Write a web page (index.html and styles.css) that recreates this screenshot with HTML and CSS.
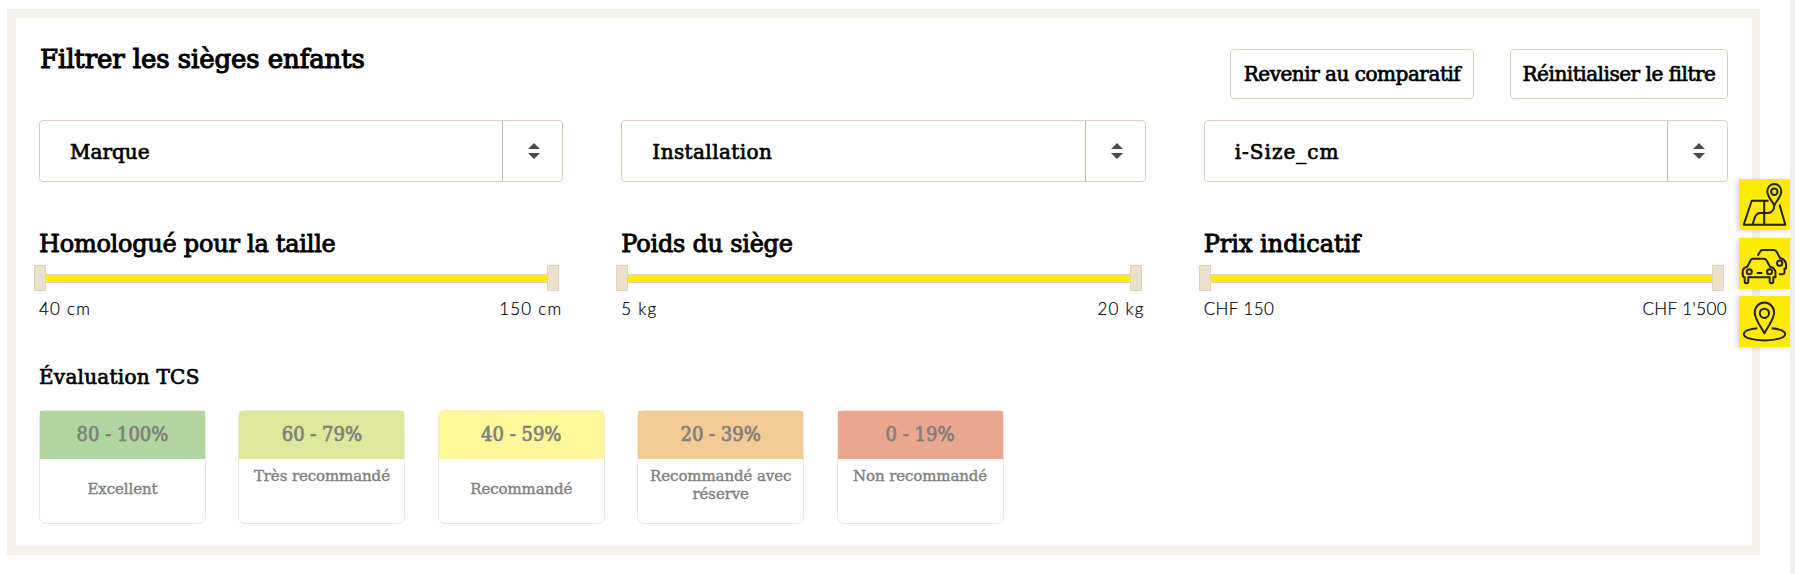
FILE: index.html
```html
<!DOCTYPE html>
<html lang="fr">
<head>
    <meta charset="UTF-8">
    <meta name="viewport" content="width=device-width, initial-scale=1.0">
    <title>Comparatif sièges enfants</title>
    <link rel="stylesheet" href="styles.css">
</head>
<body>
    <div class="filter">
        <div class="top">
            <h1>Filtrer les sièges enfants</h1>
            <div class="btnDiv">
                <button class="btn">Revenir au comparatif</button>
                <button class="btn">Réinitialiser le filtre</button>
            </div>
        </div>

        <div class="grid selects">
            <div class="select">
                <span class="label">Marque</span>
                <span class="arrows"><svg width="12" height="16" viewBox="0 0 12 16"><path d="M6 0L12 6H0zM0 10H12L6 16z"/></svg></span>
            </div>
            <div class="select">
                <span class="label wide">Installation</span>
                <span class="arrows"><svg width="12" height="16" viewBox="0 0 12 16"><path d="M6 0L12 6H0zM0 10H12L6 16z"/></svg></span>
            </div>
            <div class="select">
                <span class="label wider">i-Size_cm</span>
                <span class="arrows"><svg width="12" height="16" viewBox="0 0 12 16"><path d="M6 0L12 6H0zM0 10H12L6 16z"/></svg></span>
            </div>
        </div>

        <div class="grid ranges">
            <div class="range">
                <h2>Homologué pour la taille</h2>
                <div class="slider"><span class="handle"></span><span class="track"></span><span class="handle"></span></div>
                <div class="values"><span>40 cm</span><span>150 cm</span></div>
            </div>
            <div class="range">
                <h2>Poids du siège</h2>
                <div class="slider"><span class="handle"></span><span class="track"></span><span class="handle"></span></div>
                <div class="values"><span>5 kg</span><span>20 kg</span></div>
            </div>
            <div class="range">
                <h2 class="wide">Prix indicatif</h2>
                <div class="slider"><span class="handle"></span><span class="track"></span><span class="handle"></span></div>
                <div class="values price"><span>CHF 150</span><span>CHF 1'500</span></div>
            </div>
        </div>

        <h3>Évaluation TCS</h3>
        <div class="ratings">
            <div class="card">
                <div class="score excellent">80 - 100%</div>
                <p class="low">Excellent</p>
            </div>
            <div class="card">
                <div class="score very-good">60 - 79%</div>
                <p>Très recommandé</p>
            </div>
            <div class="card">
                <div class="score good">40 - 59%</div>
                <p class="low">Recommandé</p>
            </div>
            <div class="card">
                <div class="score reserve">20 - 39%</div>
                <p>Recommandé avec réserve</p>
            </div>
            <div class="card">
                <div class="score bad">0 - 19%</div>
                <p>Non recommandé</p>
            </div>
        </div>
    </div>

    <div class="scrollbar"></div>

    <div class="quicklinks">
        <a class="quick">
            <svg viewBox="0 0 51 51">
                <path d="M29.5 21.7H12.7L4.7 45.7H46.3L40.5 25.5M25.2 21.7V45.7M13.5 45.5L15.8 38.5Q17.5 34 21.5 34H29Q35 33.4 35.3 26.5"/>
                <path d="M35.3 26.3C33 21.5 28.3 18 28.3 12.3A7 7.3 0 0 1 42.3 12.3C42.3 18 37.5 21.5 35.3 26.3z"/>
                <circle cx="35.3" cy="12.7" r="3.2"/>
            </svg>
        </a>
        <a class="quick">
            <svg viewBox="0 0 51 51">
                <path d="M8.3 28.8L11.3 22.7Q12.2 20.8 14.3 20.8H24.8Q26.8 20.8 27.8 22.7L31 28.8Q36.5 30.2 36.5 35.5V39.3H34.3V43.5Q34.3 45.3 32.5 45.3T30.7 43.5V39.3H9.3V43.5Q9.3 45.3 7.5 45.3T5.7 43.5V39.3Q3.7 39.3 3.7 36.5V33.5Q3.7 30 8.3 28.8zM17.7 35H23.3"/>
                <circle cx="10.3" cy="33.7" r="2.5"/>
                <circle cx="30.5" cy="33.7" r="2.5"/>
                <path d="M18.7 17.7L21 13.8Q22 12 24 12H34.5Q36.8 12 37.8 14L41 20Q46.8 21.5 47 26.5V30.5H45.5V34.5Q45.3 36.3 43.5 36.3H40"/>
                <circle cx="40.7" cy="25.2" r="2.6"/>
            </svg>
        </a>
        <a class="quick">
            <svg viewBox="0 0 51 51">
                <path d="M25.4 37.2C22.5 31.5 15.7 23.5 15.7 16.6A9.7 10 0 0 1 35.1 16.6C35.1 23.5 28.3 31.5 25.4 37.2z"/>
                <circle cx="25.4" cy="17.3" r="4.6"/>
                <path d="M18.3 32.2C10 33 4.8 35.2 4.8 38.2C4.8 41.8 14 44.4 25.5 44.4S46.2 41.8 46.2 38.2C46.2 35.2 41 33 32.7 32.2"/>
            </svg>
        </a>
    </div>
</body>
</html>
```
FILE: styles.css
```css
* {
    margin: 0;
    padding: 0;
    box-sizing: border-box;
}

body {
    font-family: "DejaVu Serif", serif;
    background-color: white;
    color: black;
    display: flex;
    justify-content: space-between;
    height: 574px;
    overflow: hidden;
}

.filter {
    width: 1753px;
    height: 546px;
    margin: 9px 0 0 7px;
    border: 9px solid #f5f1e9;
    border-right-width: 8px;
    padding: 31px 24px 0 23px;
}

.scrollbar {
    width: 5px;
    background-color: #f0f0f0;
}

h1, h2, h3, .btn, .label {
    font-weight: normal;
    -webkit-text-stroke: 0.7px black;
}

.top {
    display: flex;
    justify-content: space-between;
    height: 50px;
}

h1 {
    font-size: 26px;
    line-height: 20px;
    letter-spacing: -0.1px;
    padding-left: 1px;
    -webkit-text-stroke-width: 1.1px;
}

.btnDiv {
    display: flex;
    gap: 36px;
}

.btn {
    height: 50px;
    width: 244px;
    font-family: inherit;
    font-size: 20px;
    letter-spacing: -0.48px;
    color: black;
    background-color: white;
    border: 1px solid #dccfb5;
    border-radius: 4px;
    white-space: nowrap;
    cursor: pointer;
}

.btn + .btn {
    width: 218px;
}

.grid {
    display: grid;
    grid-template-columns: repeat(3, 1fr);
    gap: 58px;
}

.selects {
    margin-top: 21px;
}

.select {
    display: flex;
    height: 62px;
    border: 1px solid #dccfb5;
    border-radius: 4px;
}

.label {
    flex: 1;
    padding-left: 30px;
    font-size: 20px;
    line-height: 62px;
}

.arrows {
    width: 60px;
    border-left: 1px solid #cdbda3;
    padding: 22px 0 0 25px;
}

.arrows svg {
    display: block;
    fill: #4a4a4a;
}

.ranges {
    margin-top: 42px;
}

h2 {
    font-size: 24px;
    line-height: 40px;
    letter-spacing: -0.25px;
    -webkit-text-stroke-width: 0.9px;
}

.wide {
    letter-spacing: 0.4px;
}

h2.wide {
    letter-spacing: 0;
}

.wider {
    letter-spacing: 1px;
}

.slider {
    display: flex;
    align-items: center;
    margin: 1px 4px 0 -5px;
}

.handle {
    width: 12px;
    height: 26px;
    background-color: #ecdfcc;
    border: 1px solid #e1d2b9;
}

.track {
    flex: 1;
    height: 9px;
    background-color: #ffeb00;
    border: solid #dccfb5;
    border-width: 1px 0;
}

.values {
    display: flex;
    justify-content: space-between;
    margin-top: 6px;
    padding-right: 1px;
    font-family: Lato, sans-serif;
    font-weight: 300;
    font-size: 17px;
    line-height: 24px;
    letter-spacing: 1.2px;
    -webkit-text-stroke: 0.2px black;
}

.price {
    letter-spacing: 0.4px;
}

h3 {
    margin-top: 41px;
    font-size: 20px;
    line-height: 30px;
    letter-spacing: 0.25px;
}

.ratings {
    display: flex;
    gap: 32.4px;
    margin-top: 18px;
}

.card {
    width: 167px;
    height: 114px;
    border: 1px solid #eee7da;
    border-radius: 7px;
    color: #808080;
    text-align: center;
}

.score {
    height: 48px;
    font-family: "DejaVu Serif Condensed", "DejaVu Serif", serif;
    font-size: 20px;
    line-height: 47px;
    -webkit-text-stroke: 0.7px #808080;
}

.excellent {
    background-color: #b2d69f;
}

.very-good {
    background-color: #dde998;
}

.good {
    background-color: #fff799;
}

.reserve {
    background-color: #f2ca94;
}

.bad {
    background-color: #eba78e;
}

.card p {
    padding: 8px 8px 0;
    font-size: 15px;
    line-height: 18px;
    letter-spacing: -0.1px;
    -webkit-text-stroke: 0.4px #808080;
}

.card .low {
    padding-top: 21px;
}

/* Shortcuts stuck to the right edge */
.quicklinks {
    position: absolute;
    top: 179px;
    right: 5px;
    display: flex;
    flex-direction: column;
    gap: 7.5px;
}

.quick {
    width: 51px;
    height: 51px;
    background-color: #ffeb00;
    box-shadow: -2px 1px 5px rgba(0, 0, 0, 0.15);
}

.quick svg {
    display: block;
    fill: none;
    stroke: #222;
    stroke-width: 2;
    stroke-linejoin: round;
}
```
